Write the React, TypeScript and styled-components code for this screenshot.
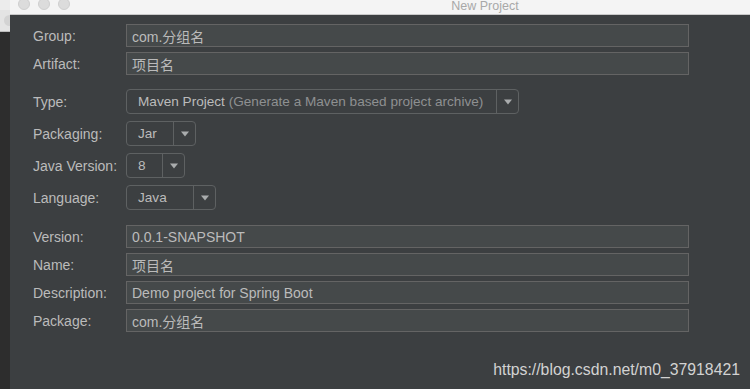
import styled, { createGlobalStyle } from "styled-components";

const GlobalStyle = createGlobalStyle`
  html, body {
    margin: 0;
    padding: 0;
    background: #2b2b2b;
  }
  body {
    font-family: "Liberation Sans", "Noto Sans CJK SC", sans-serif;
    font-size: 14px;
  }
`;

type Row =
  | { kind: "text"; label: string; value: string; gapBefore?: number }
  | {
      kind: "combo";
      label: string;
      value: string;
      hint?: string;
      width: number;
      gapBefore?: number;
    };

const ROWS: Row[] = [
  { kind: "text", label: "Group:", value: "com.分组名" },
  { kind: "text", label: "Artifact:", value: "项目名", gapBefore: 5 },
  {
    kind: "combo",
    label: "Type:",
    value: "Maven Project",
    hint: "(Generate a Maven based project archive)",
    width: 393,
    gapBefore: 14,
  },
  { kind: "combo", label: "Packaging:", value: "Jar", width: 70, gapBefore: 7 },
  { kind: "combo", label: "Java Version:", value: "8", width: 59, gapBefore: 7 },
  { kind: "combo", label: "Language:", value: "Java", width: 90, gapBefore: 7 },
  { kind: "text", label: "Version:", value: "0.0.1-SNAPSHOT", gapBefore: 15 },
  { kind: "text", label: "Name:", value: "项目名", gapBefore: 5 },
  {
    kind: "text",
    label: "Description:",
    value: "Demo project for Spring Boot",
    gapBefore: 5,
  },
  { kind: "text", label: "Package:", value: "com.分组名", gapBefore: 5 },
];

function Arrow() {
  return (
    <svg width="8" height="6" viewBox="0 0 8 6">
      <path d="M0 0.5 H8 L4 5.5 Z" fill="#a9acad" />
    </svg>
  );
}

function App() {
  return (
    <Page>
      <GlobalStyle />
      <BackWindow>
        <BackTitle>
          <BackDot />
        </BackTitle>
      </BackWindow>
      <Window>
        <TitleBar>
          <Lights>
            <Light />
            <Light />
            <Light />
          </Lights>
          <Title>New Project</Title>
        </TitleBar>
        <Body>
          <Form>
            {ROWS.map((row) => (
              <FormRow key={row.label} $gap={row.gapBefore ?? 0}>
                <Label>{row.label}</Label>
                {row.kind === "text" ? (
                  <TextField>{row.value}</TextField>
                ) : (
                  <Combo $width={row.width}>
                    <ComboValue>
                      {row.value}
                      {row.hint && <Hint> {row.hint}</Hint>}
                    </ComboValue>
                    <ComboArrow>
                      <Arrow />
                    </ComboArrow>
                  </Combo>
                )}
              </FormRow>
            ))}
          </Form>
          <Watermark>https://blog.csdn.net/m0_37918421</Watermark>
        </Body>
      </Window>
    </Page>
  );
}

const Page = styled.div`
  display: flex;
  width: 750px;
  height: 389px;
  overflow: hidden;
`;

const BackWindow = styled.div`
  width: 10px;
  flex-shrink: 0;
  display: flex;
  flex-direction: column;
  background: #2d2d2d;
`;

const BackTitle = styled.div`
  height: 32px;
  background: #e4e4e4;
  border-top: 10px solid #ececec;
  border-bottom: 1px solid #bdbdbd;
  box-sizing: border-box;
  position: relative;
  overflow: hidden;
`;

const BackDot = styled.div`
  position: absolute;
  left: 4px;
  top: 5px;
  width: 11px;
  height: 11px;
  border-radius: 50%;
  background: #d3d3d3;
`;

const Window = styled.div`
  flex: 1;
  display: flex;
  flex-direction: column;
  min-width: 0;
`;

const TitleBar = styled.div`
  height: 15px;
  flex-shrink: 0;
  background: #f4f4f4;
  border-bottom: 1px solid #c9c9c9;
  box-sizing: border-box;
  display: flex;
  align-items: flex-start;
  overflow: hidden;
`;

const Lights = styled.div`
  display: flex;
  gap: 8px;
  padding-left: 8px;
  margin-top: -2px;
`;

const Light = styled.div`
  width: 12px;
  height: 12px;
  border-radius: 50%;
  background: #dcdcdc;
  border: 0.5px solid #cfcfcf;
  box-sizing: border-box;
`;

const Title = styled.div`
  flex: 1;
  text-align: center;
  margin-left: 150px;
  font-size: 12.5px;
  line-height: 13px;
  color: #a8a8a8;
`;

const Body = styled.div`
  flex: 1;
  background: #3c3f41;
  display: flex;
  flex-direction: column;
  padding: 9px 61px 0 23px;
`;

const Form = styled.div`
  display: flex;
  flex-direction: column;
`;

const FormRow = styled.div<{ $gap: number }>`
  display: flex;
  align-items: center;
  margin-top: ${({ $gap }) => $gap}px;
`;

const Label = styled.div`
  width: 93px;
  flex-shrink: 0;
  color: #bbbbbb;
  line-height: 16px;
`;

const TextField = styled.div`
  flex: 1;
  height: 23px;
  box-sizing: border-box;
  background: #45494a;
  border: 1px solid #646464;
  padding: 0 5px;
  display: flex;
  align-items: center;
  color: #bbbbbb;
`;

const Combo = styled.div<{ $width: number }>`
  width: ${({ $width }) => $width}px;
  height: 25px;
  box-sizing: border-box;
  border: 1px solid #5e6162;
  border-radius: 4px;
  display: flex;
  align-items: stretch;
  color: #bbbbbb;
  font-size: 13.6px;
`;

const ComboValue = styled.div`
  flex: 1;
  display: flex;
  align-items: center;
  padding-left: 11px;
  white-space: pre;
`;

const Hint = styled.span`
  color: #8e9091;
`;

const ComboArrow = styled.div`
  width: 21px;
  border-left: 1px solid #5e6162;
  display: flex;
  align-items: center;
  justify-content: center;
`;

const Watermark = styled.div`
  margin-top: auto;
  margin-right: -51px;
  margin-bottom: 10px;
  align-self: flex-end;
  font-size: 15.8px;
  color: #d2d2d2;
`;

export default App;
